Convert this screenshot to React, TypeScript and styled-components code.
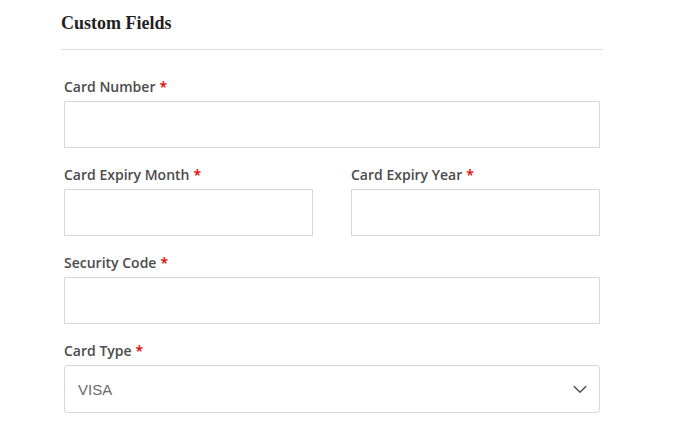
import styled, { createGlobalStyle } from "styled-components";

const GlobalStyle = createGlobalStyle`
  body {
    margin: 0;
    background: #ffffff;
  }
`;

const Section = styled.section`
  width: 542px;
  margin-left: 61px;
  padding-top: 10px;
`;

const Heading = styled.h3`
  margin: 0;
  padding-bottom: 13px;
  font-family: "Liberation Serif", "Times New Roman", serif;
  font-size: 18px;
  font-weight: 700;
  line-height: 26px;
  color: #1f1f1f;
  border-bottom: 1px solid #dcdcdc;
`;

const Fields = styled.div`
  padding: 27px 3px 0;
`;

const Row = styled.div`
  display: grid;
  grid-template-columns: 1fr 1fr;
  column-gap: 38px;
`;

const Field = styled.div`
  margin-bottom: 17px;
`;

const Label = styled.label`
  display: block;
  margin-bottom: 4px;
  font-family: "Open Sans", "Liberation Sans", sans-serif;
  font-size: 14px;
  font-weight: 600;
  line-height: 20px;
  color: #4b4b4b;
`;

const Required = styled.span`
  color: #e60000;
  margin-left: 4px;
`;

const Input = styled.input`
  display: block;
  box-sizing: border-box;
  width: 100%;
  height: 47px;
  margin: 0;
  padding: 0 13px;
  border: 1px solid #d8d8d8;
  border-radius: 0;
  background: #fff;
  font-family: "Open Sans", "Liberation Sans", sans-serif;
  font-size: 14px;
  outline: none;
`;

const SelectBox = styled.div`
  display: flex;
  align-items: center;
  justify-content: space-between;
  box-sizing: border-box;
  height: 48px;
  padding: 0 9px 0 13px;
  border: 1px solid #d8d8d8;
  border-radius: 3px;
  background: #fff;
  font-family: "Liberation Sans", Arial, sans-serif;
  font-size: 15px;
  color: #6a6a6a;
`;

const Chevron = () => (
  <svg width="20" height="20" viewBox="0 0 24 24" fill="none" stroke="#4a4a4a" strokeWidth="1.6" strokeLinecap="round" strokeLinejoin="round">
    <path d="M5 9l7 7 7-7" />
  </svg>
);

function LabeledInput({ label }: { label: string }) {
  return (
    <Field>
      <Label>
        {label}
        <Required>*</Required>
      </Label>
      <Input type="text" />
    </Field>
  );
}

export default function App() {
  return (
    <>
      <GlobalStyle />
      <Section>
        <Heading>Custom Fields</Heading>
        <Fields>
          <LabeledInput label="Card Number" />
          <Row>
            <LabeledInput label="Card Expiry Month" />
            <LabeledInput label="Card Expiry Year" />
          </Row>
          <LabeledInput label="Security Code" />
          <Field>
            <Label>
              Card Type
              <Required>*</Required>
            </Label>
            <SelectBox>
              <span>VISA</span>
              <Chevron />
            </SelectBox>
          </Field>
        </Fields>
      </Section>
    </>
  );
}
